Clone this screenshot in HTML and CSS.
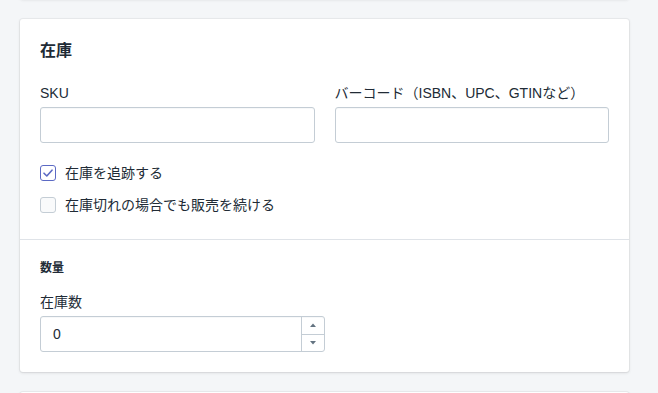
FILE: index.html
```html
<!DOCTYPE html>
<html lang="ja">
<head>
    <meta charset="UTF-8">
    <meta name="viewport" content="width=device-width, initial-scale=1.0">
    <title>在庫</title>
    <link rel="stylesheet" href="styles.css">
</head>
<body>
    <div class="page">
        <div class="card card-prev"></div>

        <div class="card">
            <div class="card-section">
                <h2 class="card-title">在庫</h2>
                <div class="field-row">
                    <div class="field">
                        <label class="label">SKU</label>
                        <div class="input"></div>
                    </div>
                    <div class="field">
                        <label class="label">バーコード（ISBN、UPC、GTINなど）</label>
                        <div class="input"></div>
                    </div>
                </div>
                <div class="checks">
                    <div class="check-row">
                        <span class="checkbox checked">
                            <svg width="10" height="8" viewBox="0 0 10 8"><path d="M1 4.2 L3.8 7 L9 1.2" fill="none" stroke="#5c6ac4" stroke-width="1.6" stroke-linecap="round" stroke-linejoin="round"/></svg>
                        </span>
                        <span>在庫を追跡する</span>
                    </div>
                    <div class="check-row">
                        <span class="checkbox"></span>
                        <span>在庫切れの場合でも販売を続ける</span>
                    </div>
                </div>
            </div>
            <div class="card-section section-qty">
                <h3 class="subheading">数量</h3>
                <div class="field field-qty">
                    <label class="label">在庫数</label>
                    <div class="input input-number">
                        <span class="value">0</span>
                        <div class="spinner">
                            <div class="spin-btn">
                                <svg width="6" height="4" viewBox="0 0 6 4"><path d="M0 4 L3 0.5 L6 4 Z" fill="#637381"/></svg>
                            </div>
                            <div class="spin-btn">
                                <svg width="6" height="4" viewBox="0 0 6 4"><path d="M0 0 L3 3.5 L6 0 Z" fill="#637381"/></svg>
                            </div>
                        </div>
                    </div>
                </div>
            </div>
        </div>

        <div class="card card-next"></div>
    </div>
</body>
</html>
```

FILE: styles.css
```css
body {
    margin: 0;
    background: #f4f6f8;
    color: #212b36;
    font-family: 'Liberation Sans', 'Noto Sans CJK JP', sans-serif;
    font-size: 14px;
    overflow: hidden;
}
.page {
    width: 609px;
    padding: 0 20px;
    display: flex;
    flex-direction: column;
}
.card {
    background: #fff;
    border-radius: 3px;
    box-shadow: 0 0 0 1px rgba(63, 63, 68, 0.05), 0 1px 3px 0 rgba(63, 63, 68, 0.15);
    margin-bottom: 20px;
}
.card-prev {
    height: 40px;
    margin-top: -41px;
}
.card-next {
    height: 40px;
}
.card-section {
    padding: 20px 20px 24px;
}
.section-qty {
    border-top: 1px solid #dfe3e8;
    padding: 20px;
}
.card-title {
    margin: 0;
    font-size: 16px;
    line-height: 24px;
    font-weight: 600;
}
.field-row {
    display: flex;
    gap: 20px;
    margin-top: 20px;
}
.field {
    flex: 1;
    display: flex;
    flex-direction: column;
    gap: 4px;
}
.label {
    line-height: 20px;
}
.input {
    height: 34px;
    border: 1px solid #c4cdd5;
    border-radius: 3px;
    box-shadow: inset 0 1px 0 0 rgba(99, 115, 129, 0.05);
    background: #fff;
}
.checks {
    display: flex;
    flex-direction: column;
    gap: 12px;
    margin-top: 20px;
}
.check-row {
    display: flex;
    align-items: center;
    gap: 9px;
    line-height: 20px;
}
.checkbox {
    width: 14px;
    height: 14px;
    border: 1px solid #c4cdd5;
    border-radius: 3px;
    background: #f9fafb;
    display: flex;
    justify-content: center;
    align-items: center;
}
.checkbox.checked {
    border-color: #5c6ac4;
    background: #fff;
}
.subheading {
    margin: 0;
    font-size: 12px;
    line-height: 16px;
    font-weight: 700;
}
.field-qty {
    width: 285px;
    margin-top: 16px;
}
.input-number {
    display: flex;
    height: 34px;
}
.input-number .value {
    flex: 1;
    padding-left: 12px;
    line-height: 34px;
}
.spinner {
    width: 22px;
    border-left: 1px solid #c4cdd5;
    display: flex;
    flex-direction: column;
}
.spin-btn {
    flex: 1;
    display: flex;
    justify-content: center;
    align-items: center;
}
.spin-btn + .spin-btn {
    border-top: 1px solid #c4cdd5;
}
```
